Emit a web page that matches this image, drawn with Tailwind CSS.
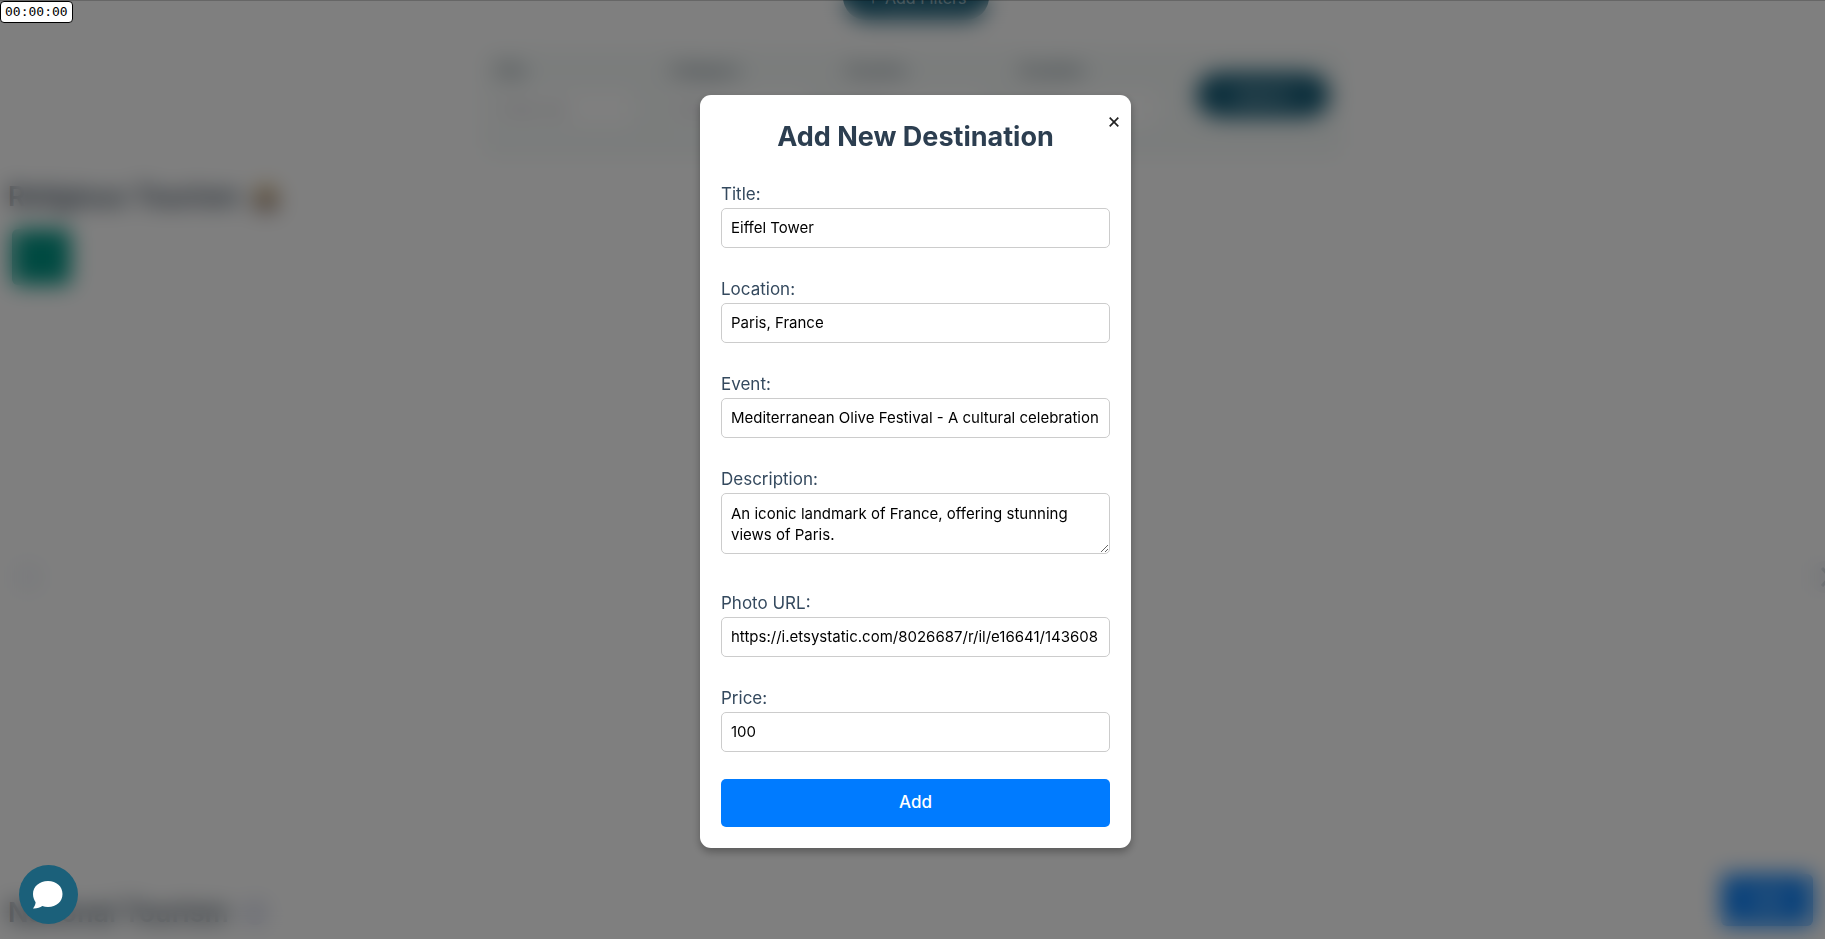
<!DOCTYPE html>
<html lang="en">
<head>
<meta charset="utf-8">
<meta name="viewport" content="width=device-width, initial-scale=1">
<title>Add New Destination</title>
<script src="https://cdn.jsdelivr.net/npm/@tailwindcss/browser@4"></script>
</head>
<body class="h-screen overflow-hidden bg-white font-[Inter,sans-serif] text-[#2c3e50]">
<main class="flex h-screen flex-col overflow-hidden" inert>
  <div class="-mt-[26px] flex shrink-0 justify-center pl-1.5">
    <button class="h-[46px] w-[146px] rounded-full bg-[#1b607a] pt-0.5 text-base text-white">＋ Add Filters</button>
  </div>
  <form class="mx-auto mt-[30px] flex w-[862px] shrink-0 items-start gap-[37px] rounded-xl bg-[#f6faf9] px-3.5 pt-2 pb-8">
    <label class="w-[142px] text-base font-normal">City<input class="mt-2 block h-9 w-full rounded-lg bg-white px-2 text-sm font-normal" placeholder="Enter city"></label>
    <label class="w-[142px] text-base font-normal">Category<input class="mt-2 block h-9 w-full rounded-lg bg-white px-2 text-sm font-normal" placeholder="Enter"></label>
    <label class="w-[142px] text-base font-normal">Country<input class="mt-2 block h-9 w-full rounded-lg bg-white px-2 text-sm font-normal" placeholder="Enter"></label>
    <label class="w-[142px] text-base font-normal">Duration<input class="mt-2 block h-9 w-full rounded-lg bg-white px-2 text-sm font-normal" placeholder="Enter"></label>
    <button class="mt-3.5 h-[46px] w-[134px] shrink-0 rounded-full bg-[#1b607a] text-base text-white">Search</button>
  </form>
  <section class="mt-[19px] flex flex-1 flex-col">
    <h2 class="flex items-center gap-3 pl-2 text-[27px] leading-10 font-semibold">Religious Tourism
      <svg class="size-7" viewBox="0 0 28 28" aria-hidden="true"><path fill="#d9b26a" d="M14 0 28 13H0z"/><path fill="#8b7569" d="M3 13h22v14H3z"/></svg>
    </h2>
    <div class="mt-3 ml-3 h-14 w-[59px] shrink-0 rounded-md bg-[#009483]"></div>
    <div class="mt-[276px] flex items-center justify-between pl-3">
      <div class="size-8 rounded-full bg-[#f4f6fa]"></div>
      <svg class="-mr-4 size-8" viewBox="0 0 32 32" fill="none" aria-hidden="true"><circle cx="16" cy="16" r="16" fill="#f4f6fa"/><path d="m13 7 8 9-8 9" stroke="#bdc7d0" stroke-width="3"/></svg>
    </div>
    <div class="mt-[281px] flex shrink-0 items-start justify-between pr-3">
      <h2 class="mt-[19px] flex items-center gap-3 pl-2 text-[27px] leading-10 font-semibold">National Tourism
        <svg class="size-7" viewBox="0 0 28 28" aria-hidden="true"><circle cx="14" cy="14" r="12" fill="#d5d9ea"/></svg>
      </h2>
      <button class="h-[52px] w-[92px] rounded-md bg-[#1584f5] text-base text-white">Add</button>
    </div>
  </section>
</main>

<div class="fixed inset-0 flex items-center justify-center border-t border-black/20 bg-black/50 pt-[3px] pl-1.5 backdrop-blur-[11px]">
  <section role="dialog" aria-labelledby="dialog-title" class="relative w-[431px] rounded-[11px] bg-white p-[21px] shadow-[0_4px_9px_rgba(0,0,0,0.3)]">
    <button aria-label="Close" class="absolute top-[17px] right-[7px] flex size-5 items-center justify-center">
      <svg class="size-[10px]" viewBox="0 0 10 10" fill="none" stroke="#222" stroke-width="1.7" aria-hidden="true"><path d="m.7.7 8.600 8.600M9.300.7.7 9.300"/></svg>
    </button>
    <h2 id="dialog-title" class="mb-6 text-center text-[27px] leading-[42px] font-bold">Add New Destination</h2>
    <form class="flex flex-col">
      <label for="title" class="mb-0.5 text-[17px] leading-6 text-[#34495e]">Title:</label>
      <input id="title" value="Eiffel Tower" class="mb-[29px] h-[40px] w-full rounded-[5px] border border-[#ccc] px-[9px] pb-px text-[15px] text-black">
      <label for="location" class="mb-0.5 text-[17px] leading-6 text-[#34495e]">Location:</label>
      <input id="location" value="Paris, France" class="mb-[29px] h-[40px] w-full rounded-[5px] border border-[#ccc] px-[9px] pb-px text-[15px] text-black">
      <label for="event" class="mb-0.5 text-[17px] leading-6 text-[#34495e]">Event:</label>
      <input id="event" value="Mediterranean Olive Festival - A cultural celebration" class="mb-[29px] h-[40px] w-full rounded-[5px] border border-[#ccc] px-[9px] pb-px text-[15px] text-black">
      <label for="description" class="mb-0.5 text-[17px] leading-6 text-[#34495e]">Description:</label>
      <textarea id="description" class="mb-[37px] h-[61px] w-full resize-y overflow-hidden rounded-[5px] border border-[#ccc] px-[9px] py-[9px] text-[15px] leading-[21px] text-black">An iconic landmark of France, offering stunning views of Paris.</textarea>
      <label for="photo" class="mb-0.5 text-[17px] leading-6 text-[#34495e]">Photo URL:</label>
      <input id="photo" value="https://i.etsystatic.com/8026687/r/il/e16641/143608" class="mb-[29px] h-[40px] w-full rounded-[5px] border border-[#ccc] px-[9px] pb-px text-[15px] text-black">
      <label for="price" class="mb-0.5 text-[17px] leading-6 text-[#34495e]">Price:</label>
      <input id="price" value="100" class="mb-[27px] h-[40px] w-full rounded-[5px] border border-[#ccc] px-[9px] pb-px text-[15px] text-black">
      <button type="button" class="h-12 w-full rounded-[5px] bg-[#007bff] text-[17px] font-medium text-white">Add</button>
    </form>
  </section>
</div>

<button aria-label="Open chat" class="fixed bottom-[15px] left-[19px] flex size-[59px] items-center justify-center rounded-full bg-[#1b607a] pr-0.5">
  <svg class="h-7 w-[30px]" viewBox="0 0 30 28" fill="#fff" aria-hidden="true"><path d="M15 0C6.500 0 0 5.500 0 13c0 3.500 1.200 6 2.600 8.200C2.500 23.500 1.500 25.500 0 27.500c3.500.3 7-.8 9.300-2.400C11 25.700 13 26 15 26c8.500 0 14.500-5.500 14.500-13S23.500 0 15 0z"/></svg>
</button>
<div class="fixed top-px left-0 rounded-[4px] border border-black bg-white px-1 font-['DejaVu_Sans_Mono',monospace] text-[13px] leading-5 text-black">00:00:00</div>
</body>
</html>
